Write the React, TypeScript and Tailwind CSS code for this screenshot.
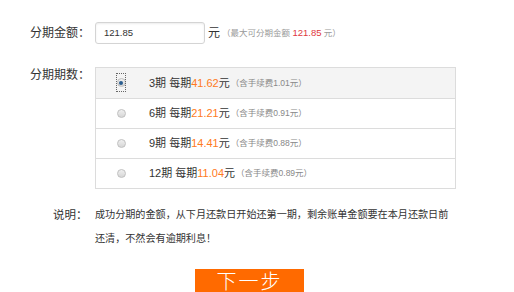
import React from "react";

const font = { fontFamily: '"Liberation Sans", "Noto Sans CJK SC", sans-serif' };

type Row = { n: string; per: string; fee: string; selected?: boolean };
const rows: Row[] = [
  { n: "3期", per: "41.62", fee: "1.01", selected: true },
  { n: "6期", per: "21.21", fee: "0.91" },
  { n: "9期", per: "14.41", fee: "0.88" },
  { n: "12期", per: "11.04", fee: "0.89" },
];

function Radio({ selected }: { selected?: boolean }) {
  return (
    <span className="relative flex items-center justify-center w-[10px] h-[19px]">
      {selected && (
        <span className="absolute inset-0 border border-dotted border-[#666]" />
      )}
      <span className="flex items-center justify-center w-[9px] h-[9px] rounded-full border border-[#c0c0c0] bg-gradient-to-b from-[#f0f0f0] to-[#d6d6d6]">
        {selected && <span className="w-[4px] h-[4px] rounded-full bg-[#2a5d8f]" />}
      </span>
    </span>
  );
}

export default function App() {
  return (
    <div className="w-[514px] h-[292px] bg-white overflow-hidden text-[#333]" style={font}>
      <div className="pt-[22px]">
        {/* amount */}
        <div className="flex items-center h-[22px]">
          <div className="w-[95px] pl-[30px] text-[12px] leading-[16px]">分期金额：</div>
          <div className="w-[110px] h-[22px] border border-[#d4d4d4] rounded-[3px] shadow-[inset_0_1px_2px_rgba(0,0,0,0.08)] flex items-center pl-[8px] text-[9.5px]">
            121.85
          </div>
          <span className="ml-[3px] text-[12px]">元</span>
          <span className="ml-[2px] text-[8.5px] text-[#999]">
            （最大可分期金额 <span className="text-[#e0393e] text-[9.5px]">121.85</span> 元）
          </span>
        </div>

        {/* periods */}
        <div className="flex mt-[23px]">
          <div className="w-[95px] pl-[30px] text-[12px] leading-[16px]">分期期数：</div>
          <div className="w-[361px] border border-[#dcdcdc]">
            {rows.map((r, i) => (
              <div
                key={r.n}
                className={
                  "flex items-center h-[30px] " +
                  (i > 0 ? "border-t border-[#dcdcdc] " : "") +
                  (r.selected ? "bg-[#f4f4f4]" : "bg-white")
                }
              >
                <div className="w-[53px] flex justify-end pr-[23px] -mt-[1px]">
                  <Radio selected={r.selected} />
                </div>
                <span className="text-[11px] whitespace-nowrap">
                  {r.n} 每期<span className="text-[#ff7a22]">{r.per}</span>元
                </span>
                <span className="ml-[1px] text-[8.5px] text-[#888] whitespace-nowrap">
                  （含手续费{r.fee}元）
                </span>
              </div>
            ))}
          </div>
        </div>

        {/* note */}
        <div className="flex mt-[14px]">
          <div className="w-[95px] pl-[53px] text-[11.5px] leading-[24px]">说明：</div>
          <div className="text-[10.1px] leading-[24px] whitespace-nowrap">
            成功分期的金额，从下月还款日开始还第一期，剩余账单金额要在本月还款日前
            <br />
            还清，不然会有逾期利息！
          </div>
        </div>

        {/* button */}
        <div className="flex mt-[18px] pl-[195px]">
          <div className="w-[109px] h-[25px] bg-[#ff6a00] text-white text-[20px] leading-[20px] font-light flex items-start justify-center pt-[3px] tracking-[2px]">
            下一步
          </div>
        </div>
      </div>
    </div>
  );
}
